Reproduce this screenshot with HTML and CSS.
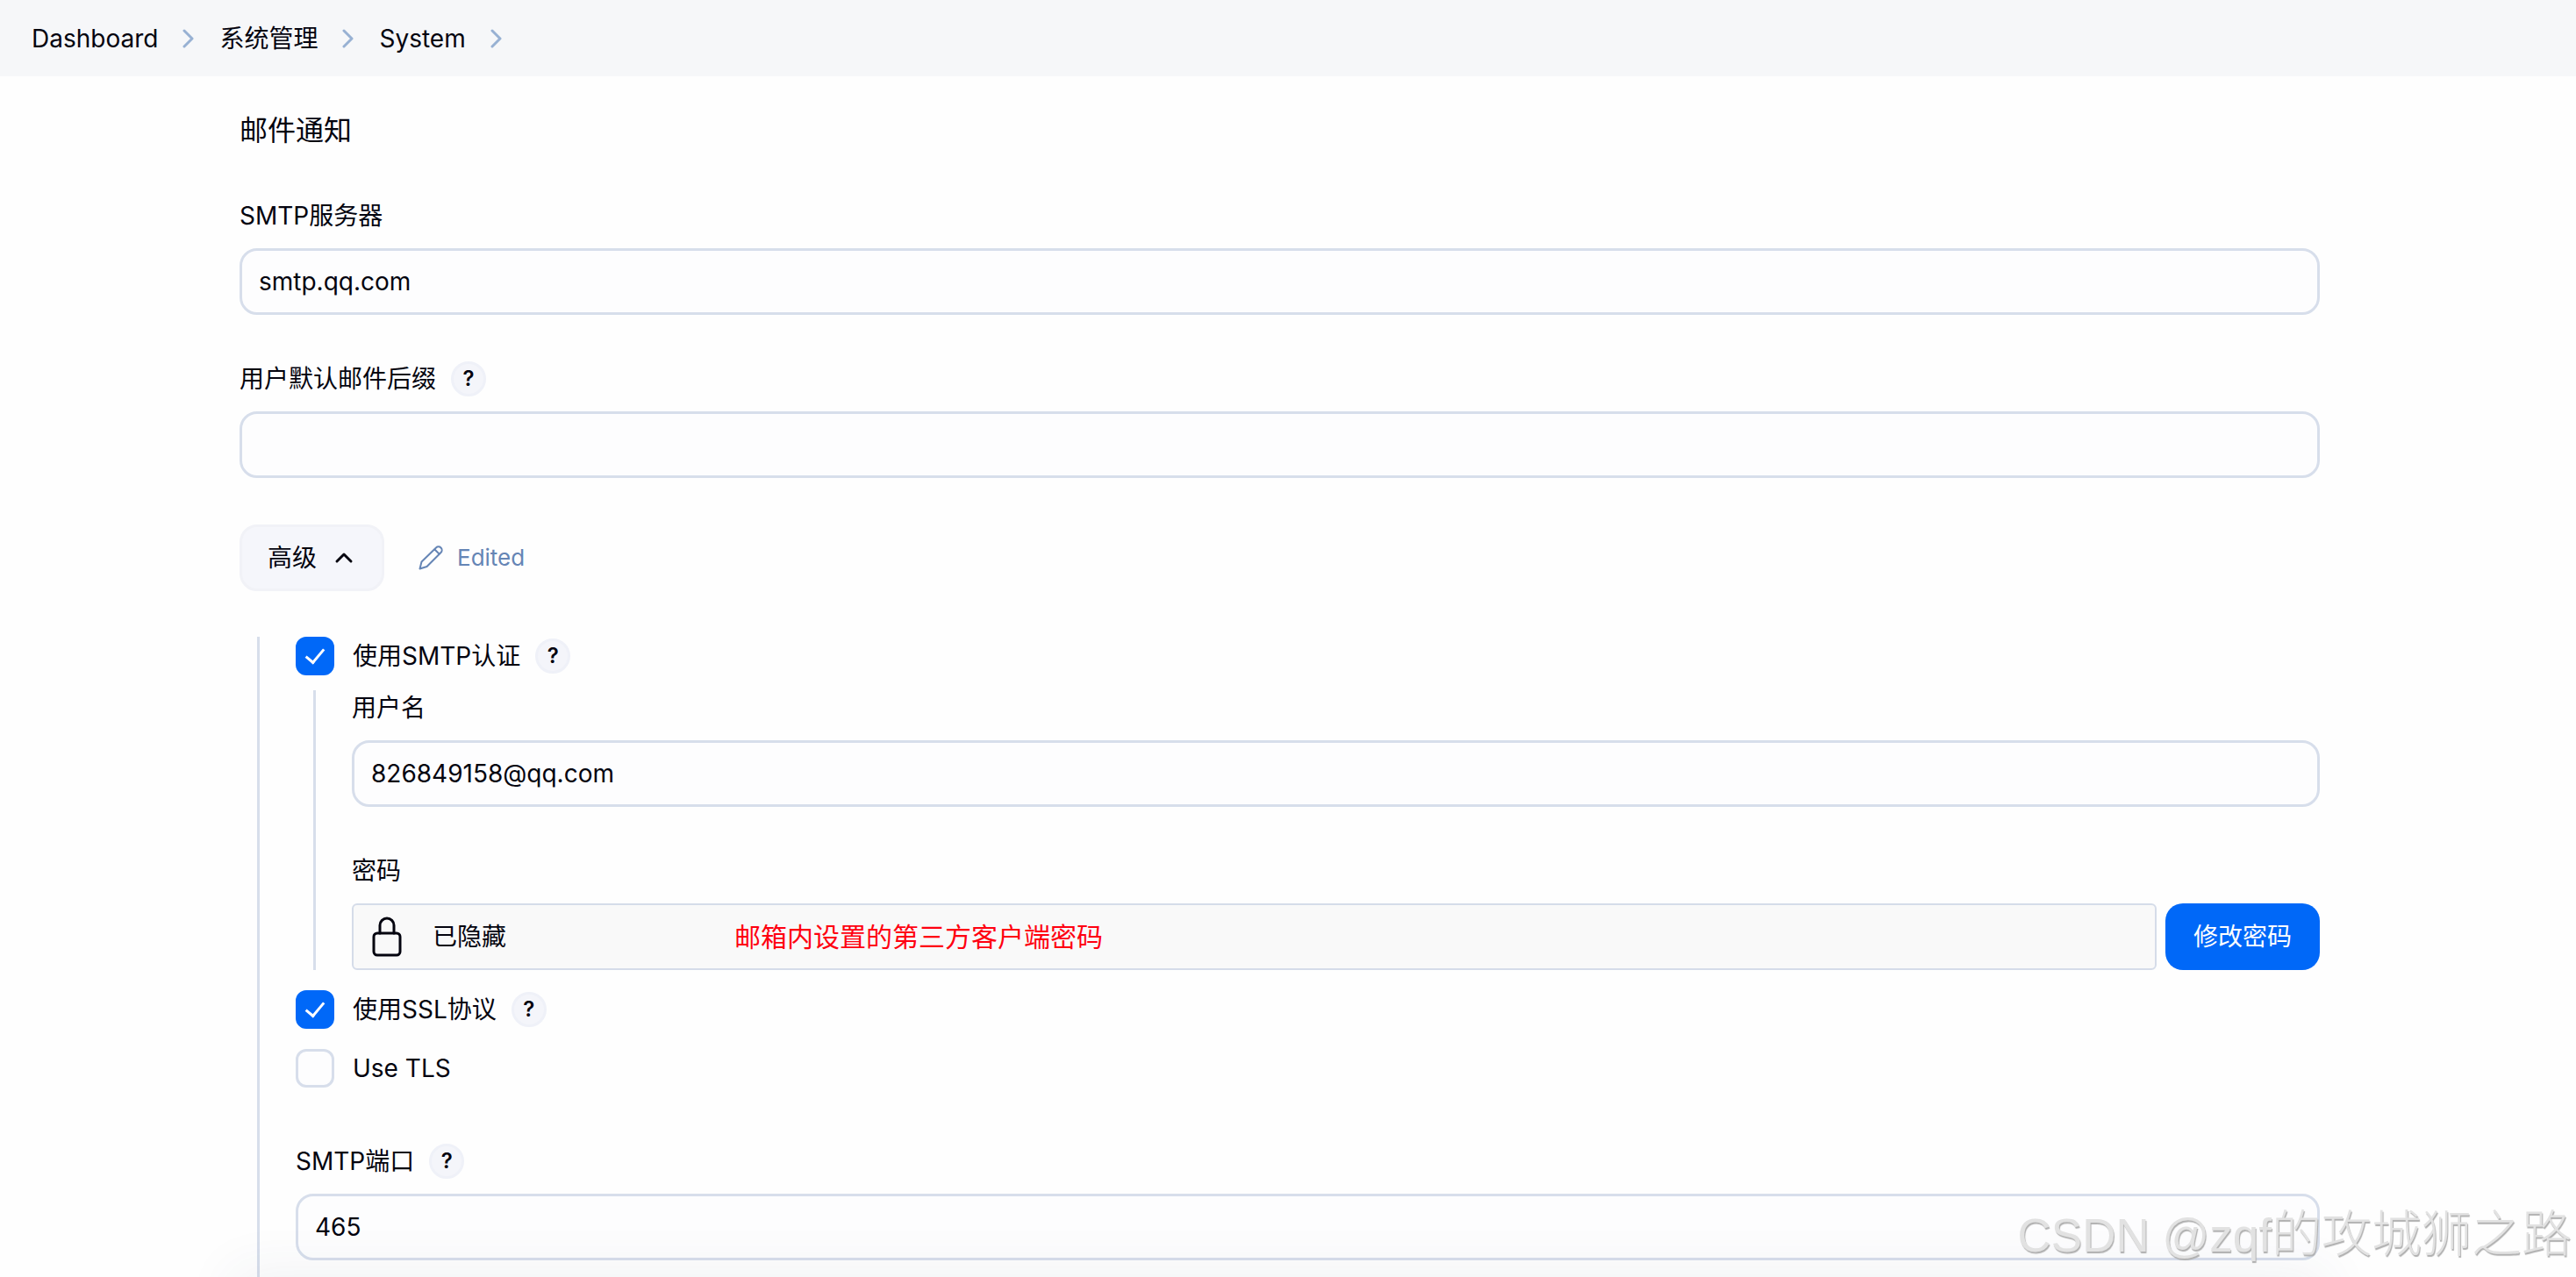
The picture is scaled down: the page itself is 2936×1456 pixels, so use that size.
FILE: index.html
```html
<!DOCTYPE html>
<html lang="zh-CN">
<head>
  <meta charset="UTF-8">
  <title>邮件通知</title>
  <link rel="stylesheet" href="styles.css">
</head>
<body>
  <nav class="breadcrumb">
    <a href="#">Dashboard</a>
    <svg class="sep" viewBox="0 0 14 22"><path d="M2 2l9 9-9 9"/></svg>
    <a href="#">系统管理</a>
    <svg class="sep" viewBox="0 0 14 22"><path d="M2 2l9 9-9 9"/></svg>
    <a href="#">System</a>
    <svg class="sep" viewBox="0 0 14 22"><path d="M2 2l9 9-9 9"/></svg>
  </nav>

  <main>
    <h1>邮件通知</h1>

    <div class="field">
      <div class="label-row"><label for="smtp-server">SMTP服务器</label></div>
      <input class="text" type="text" id="smtp-server" value="smtp.qq.com">
    </div>

    <div class="field">
      <div class="label-row">
        <label for="suffix">用户默认邮件后缀</label>
        <button class="help" type="button">?</button>
      </div>
      <input class="text" type="text" id="suffix">
    </div>

    <div class="advanced-row">
      <button class="advanced" type="button">
        高级
        <svg class="chevron" viewBox="0 0 28 28"><path d="M6 18l8-8 8 8"/></svg>
      </button>
      <span class="edited">
        <svg class="pencil" viewBox="0 0 28 28">
          <path d="M1.500 26.500l2-8L20 2.500a3.800 3.800 0 0 1 5.500 5.500L9.500 24z"/>
          <path d="M18.500 4.500l5 5"/>
        </svg>
        Edited
      </span>
    </div>

    <div class="group settings">
      <div class="check-row">
        <input type="checkbox" id="use-auth" checked>
        <label for="use-auth">使用SMTP认证</label>
        <button class="help" type="button">?</button>
      </div>

      <div class="group credentials">
        <div class="field">
          <div class="label-row"><label for="username">用户名</label></div>
          <input class="text" type="text" id="username" value="826849158@qq.com">
        </div>
        <div class="field">
          <div class="label-row">密码</div>
          <div class="password">
            <div class="concealed">
              <svg class="lock" viewBox="0 0 34 46">
                <rect x="2" y="19" width="30" height="25" rx="4"/>
                <path d="M9 19V10a8 8 0 0 1 16 0v9"/>
              </svg>
              <span>已隐藏</span>
              <span class="note">邮箱内设置的第三方客户端密码</span>
            </div>
            <button class="primary" type="button">修改密码</button>
          </div>
        </div>
      </div>

      <div class="check-row">
        <input type="checkbox" id="use-ssl" checked>
        <label for="use-ssl">使用SSL协议</label>
        <button class="help" type="button">?</button>
      </div>
      <div class="check-row">
        <input type="checkbox" id="use-tls">
        <label for="use-tls">Use TLS</label>
      </div>

      <div class="field port">
        <div class="label-row">
          <label for="port">SMTP端口</label>
          <button class="help" type="button">?</button>
        </div>
        <input class="text" type="text" id="port" value="465">
      </div>
    </div>
  </main>

  <div class="bottom-shadow"></div>
  <div class="watermark">CSDN @zqf<span>的攻城狮之路</span></div>
</body>
</html>
```

FILE: styles.css
```css
* {
  box-sizing: border-box;
}

body {
  margin: 0;
  height: 100vh;
  overflow: hidden;
  display: flex;
  flex-direction: column;
  background-color: #fefefe;
  color: #04040f;
  font-family: Inter, "Noto Sans CJK SC", sans-serif;
  font-size: 28px;
  font-weight: 400;
  line-height: 40px;
}

button, input {
  margin: 0;
  font: inherit;
  color: inherit;
}

svg {
  flex: none;
  fill: none;
  stroke: currentColor;
  stroke-width: 3px;
  stroke-linecap: round;
  stroke-linejoin: round;
}

/* Breadcrumb */
.breadcrumb {
  flex: none;
  display: flex;
  align-items: center;
  gap: 28px;
  height: 87px;
  padding: 0 36px;
  background-color: #f6f7f9;
}
.breadcrumb a {
  color: inherit;
  text-decoration: none;
}
.sep {
  width: 14px;
  height: 22px;
  color: #98b1d3;
}

/* Form */
main {
  flex: 1;
  display: flex;
  flex-direction: column;
  padding: 42px 292px 0 273px;
}
h1 {
  margin: 0 0 57px;
  font-size: 32px;
  font-weight: 400;
  line-height: 40px;
}
.field {
  margin-bottom: 53px;
}
.label-row {
  display: flex;
  align-items: center;
  gap: 17px;
  height: 40px;
  margin-bottom: 17px;
}
.text {
  display: block;
  width: 100%;
  height: 76px;
  padding: 0 19px;
  border: 3px solid #d7deeb;
  border-radius: 20px;
  background-color: #fdfdfe;
}
.help {
  width: 40px;
  height: 40px;
  padding: 0;
  border: 3px solid #eff1f8;
  border-radius: 50%;
  background-color: #f4f5fa;
  font-size: 24px;
  font-weight: 600;
  line-height: 32px;
}

/* Advanced toggle */
.advanced-row {
  display: flex;
  align-items: center;
  gap: 39px;
  margin-bottom: 52px;
}
.advanced {
  display: flex;
  align-items: center;
  gap: 17px;
  height: 76px;
  padding: 0 29px;
  border: 3px solid #f1f2f7;
  border-radius: 20px;
  background-color: #f5f6fb;
}
.chevron {
  width: 28px;
  height: 28px;
}
.edited {
  display: flex;
  align-items: center;
  gap: 16px;
  color: #6585b5;
  font-size: 26px;
}
.pencil {
  width: 28px;
  height: 28px;
  stroke-width: 2px;
}

/* Nested groups */
.group {
  margin-left: 20px;
  padding-left: 41px;
  border-left: 3px solid #d7deeb;
}
.settings {
  flex: 1;
}
.credentials {
  margin-top: 17px;
  margin-bottom: 23px;
}
.credentials .field:last-child {
  margin-bottom: 0;
}
.check-row {
  display: flex;
  align-items: center;
  height: 44px;
}
.check-row + .check-row {
  margin-top: 23px;
}
.check-row label {
  margin: 0 17px 0 21px;
}
.check-row input {
  appearance: none;
  display: grid;
  place-items: center;
  width: 44px;
  height: 44px;
  border: 3px solid #d7deeb;
  border-radius: 12px;
  background-color: #fdfdfe;
}
.check-row input:checked {
  border-color: #0068f8;
  background-color: #0068f8;
}
.check-row input:checked::before {
  content: "";
  width: 9px;
  height: 18px;
  margin-bottom: 5px;
  border: solid #fff;
  border-width: 0 3px 3px 0;
  transform: rotate(40deg);
}
.port {
  margin-top: 64px;
  margin-bottom: 0;
}

/* Password */
.password {
  display: flex;
  gap: 10px;
}
.concealed {
  flex: 1;
  display: flex;
  align-items: center;
  height: 76px;
  padding: 0 21px;
  border: 2px solid #d5dce9;
  border-radius: 6px;
  background-color: #f9f9f9;
}
.lock {
  width: 34px;
  height: 46px;
  margin-right: 35px;
}
.note {
  margin-left: 260px;
  color: #ff0010;
  font-size: 30px;
}
.primary {
  height: 76px;
  padding: 0 32px;
  border: 0;
  border-radius: 20px;
  background-color: #0068f8;
  color: #fff;
}

/* Overlays */
.bottom-shadow {
  position: fixed;
  top: 100%;
  left: 273px;
  right: 292px;
  height: 76px;
  box-shadow: 0 0 60px 10px rgba(50, 70, 110, 0.06);
}
.watermark {
  position: fixed;
  right: 5px;
  bottom: 13px;
  color: #e2e2e2;
  font-family: "Liberation Sans", "Noto Sans CJK SC", sans-serif;
  font-size: 53px;
  font-weight: 300;
  line-height: 68px;
  text-shadow: 1px 2px 1px #b0b0b0;
}
.watermark span {
  font-size: 57px;
}
```
